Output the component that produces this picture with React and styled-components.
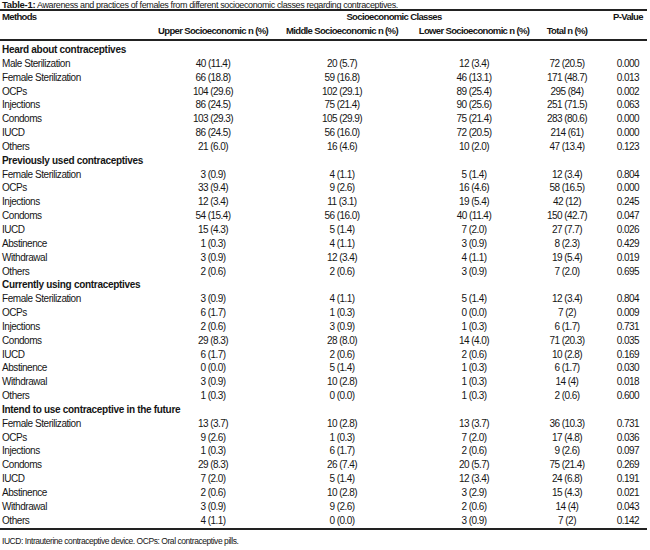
import React from 'react'
import styled, {createGlobalStyle} from 'styled-components'

const GlobalStyle = createGlobalStyle`
  html, body {
    margin: 0;
    padding: 0;
    background: #fff;
  }
  body {
    font-family: 'Liberation Sans', Arial, sans-serif;
    color: #151515;
  }
`

const COLS = '150px 126px 132px 132px 54px 53px'

const Page = styled.div`
  width: 650px;
  height: 550px;
  overflow: hidden;
`

const Caption = styled.div`
  height: 9px;
  line-height: 10px;
  font-size: 9px;
  letter-spacing: -0.38px;
  padding-left: 2px;
  white-space: nowrap;

  b {
    font-size: 9.5px;
    letter-spacing: -0.3px;
  }
`

const Table = styled.div`
  width: 647px;
  border-top: 2px solid #222;
  border-bottom: 2px solid #222;
`

const Head = styled.div`
  border-bottom: 2px solid #222;
`

const Row = styled.div`
  display: grid;
  grid-template-columns: ${COLS};
  align-items: center;
  height: ${(p) => p.$h || 13.85}px;
  line-height: ${(p) => p.$h || 13.85}px;
  white-space: nowrap;
`

const HeadCell = styled.div`
  font-weight: bold;
  font-size: 9.5px;
  letter-spacing: -0.65px;
  text-align: ${(p) => p.$align || 'center'};
  padding-left: ${(p) => p.$pl || 0}px;
  grid-column: ${(p) => p.$span || 'auto'};
`

const Body = styled.div`
  padding-top: 2px;
`

const SectionTitle = styled.div`
  grid-column: 1 / -1;
  font-weight: bold;
  font-size: 10px;
  letter-spacing: -0.3px;
  padding-left: 2px;
`

const Label = styled.div`
  font-size: 10px;
  letter-spacing: -0.45px;
  padding-left: 2px;
`

const Value = styled.div`
  font-size: 10px;
  letter-spacing: -0.55px;
  text-align: center;
  padding-left: ${(p) => p.$pl || 0}px;
`

const Footnote = styled.div`
  margin-top: 6px;
  line-height: 10px;
  font-size: 8.5px;
  letter-spacing: -0.45px;
  padding-left: 2px;
  white-space: nowrap;
`

const sections = [
  {
    title: 'Heard about contraceptives',
    rows: [
      ['Male Sterilization', '40 (11.4)', '20 (5.7)', '12 (3.4)', '72 (20.5)', '0.000'],
      ['Female Sterilization', '66 (18.8)', '59 (16.8)', '46 (13.1)', '171 (48.7)', '0.013'],
      ['OCPs', '104 (29.6)', '102 (29.1)', '89 (25.4)', '295 (84)', '0.002'],
      ['Injections', '86 (24.5)', '75 (21.4)', '90 (25.6)', '251 (71.5)', '0.063'],
      ['Condoms', '103 (29.3)', '105 (29.9)', '75 (21.4)', '283 (80.6)', '0.000'],
      ['IUCD', '86 (24.5)', '56 (16.0)', '72 (20.5)', '214 (61)', '0.000'],
      ['Others', '21 (6.0)', '16 (4.6)', '10 (2.0)', '47 (13.4)', '0.123'],
    ],
  },
  {
    title: 'Previously used contraceptives',
    rows: [
      ['Female Sterilization', '3 (0.9)', '4 (1.1)', '5 (1.4)', '12 (3.4)', '0.804'],
      ['OCPs', '33 (9.4)', '9 (2.6)', '16 (4.6)', '58 (16.5)', '0.000'],
      ['Injections', '12 (3.4)', '11 (3.1)', '19 (5.4)', '42 (12)', '0.245'],
      ['Condoms', '54 (15.4)', '56 (16.0)', '40 (11.4)', '150 (42.7)', '0.047'],
      ['IUCD', '15 (4.3)', '5 (1.4)', '7 (2.0)', '27 (7.7)', '0.026'],
      ['Abstinence', '1 (0.3)', '4 (1.1)', '3 (0.9)', '8 (2.3)', '0.429'],
      ['Withdrawal', '3 (0.9)', '12 (3.4)', '4 (1.1)', '19 (5.4)', '0.019'],
      ['Others', '2 (0.6)', '2 (0.6)', '3 (0.9)', '7 (2.0)', '0.695'],
    ],
  },
  {
    title: 'Currently using contraceptives',
    rows: [
      ['Female Sterilization', '3 (0.9)', '4 (1.1)', '5 (1.4)', '12 (3.4)', '0.804'],
      ['OCPs', '6 (1.7)', '1 (0.3)', '0 (0.0)', '7 (2)', '0.009'],
      ['Injections', '2 (0.6)', '3 (0.9)', '1 (0.3)', '6 (1.7)', '0.731'],
      ['Condoms', '29 (8.3)', '28 (8.0)', '14 (4.0)', '71 (20.3)', '0.035'],
      ['IUCD', '6 (1.7)', '2 (0.6)', '2 (0.6)', '10 (2.8)', '0.169'],
      ['Abstinence', '0 (0.0)', '5 (1.4)', '1 (0.3)', '6 (1.7)', '0.030'],
      ['Withdrawal', '3 (0.9)', '10 (2.8)', '1 (0.3)', '14 (4)', '0.018'],
      ['Others', '1 (0.3)', '0 (0.0)', '1 (0.3)', '2 (0.6)', '0.600'],
    ],
  },
  {
    title: 'Intend to use contraceptive in the future',
    rows: [
      ['Female Sterilization', '13 (3.7)', '10 (2.8)', '13 (3.7)', '36 (10.3)', '0.731'],
      ['OCPs', '9 (2.6)', '1 (0.3)', '7 (2.0)', '17 (4.8)', '0.036'],
      ['Injections', '1 (0.3)', '6 (1.7)', '2 (0.6)', '9 (2.6)', '0.097'],
      ['Condoms', '29 (8.3)', '26 (7.4)', '20 (5.7)', '75 (21.4)', '0.269'],
      ['IUCD', '7 (2.0)', '5 (1.4)', '12 (3.4)', '24 (6.8)', '0.191'],
      ['Abstinence', '2 (0.6)', '10 (2.8)', '3 (2.9)', '15 (4.3)', '0.021'],
      ['Withdrawal', '3 (0.9)', '9 (2.6)', '2 (0.6)', '14 (4)', '0.043'],
      ['Others', '4 (1.1)', '0 (0.0)', '3 (0.9)', '7 (2)', '0.142'],
    ],
  },
]

const classes = ['Upper Socioeconomic n (%)', 'Middle Socioeconomic n (%)', 'Lower Socioeconomic n (%)', 'Total n (%)']

const App = () => {
  return (
    <Page>
      <GlobalStyle />
      <Caption>
        <b>Table-1:</b> Awareness and practices of females from different socioeconomic classes regarding contraceptives.
      </Caption>
      <Table>
        <Head>
          <Row $h={11}>
            <HeadCell $align='left' $pl={2}>Methods</HeadCell>
            <HeadCell $span='2 / 6' $pl={44}>Socioeconomic Classes</HeadCell>
            <HeadCell $pl={15}>P-Value</HeadCell>
          </Row>
          <Row $h={17}>
            <div />
            {classes.map((c) => (
              <HeadCell key={c}>{c}</HeadCell>
            ))}
            <div />
          </Row>
        </Head>
        <Body>
          {sections.map((s) => (
            <React.Fragment key={s.title}>
              <Row>
                <SectionTitle>{s.title}</SectionTitle>
              </Row>
              {s.rows.map(([label, ...vals]) => (
                <Row key={s.title + label}>
                  <Label>{label}</Label>
                  {vals.map((v, i) => (
                    <Value key={i} $pl={i === 4 ? 15 : 0}>
                      {v}
                    </Value>
                  ))}
                </Row>
              ))}
            </React.Fragment>
          ))}
        </Body>
      </Table>
      <Footnote>IUCD: Intrauterine contraceptive device. OCPs: Oral contraceptive pills.</Footnote>
    </Page>
  )
}

export default App
